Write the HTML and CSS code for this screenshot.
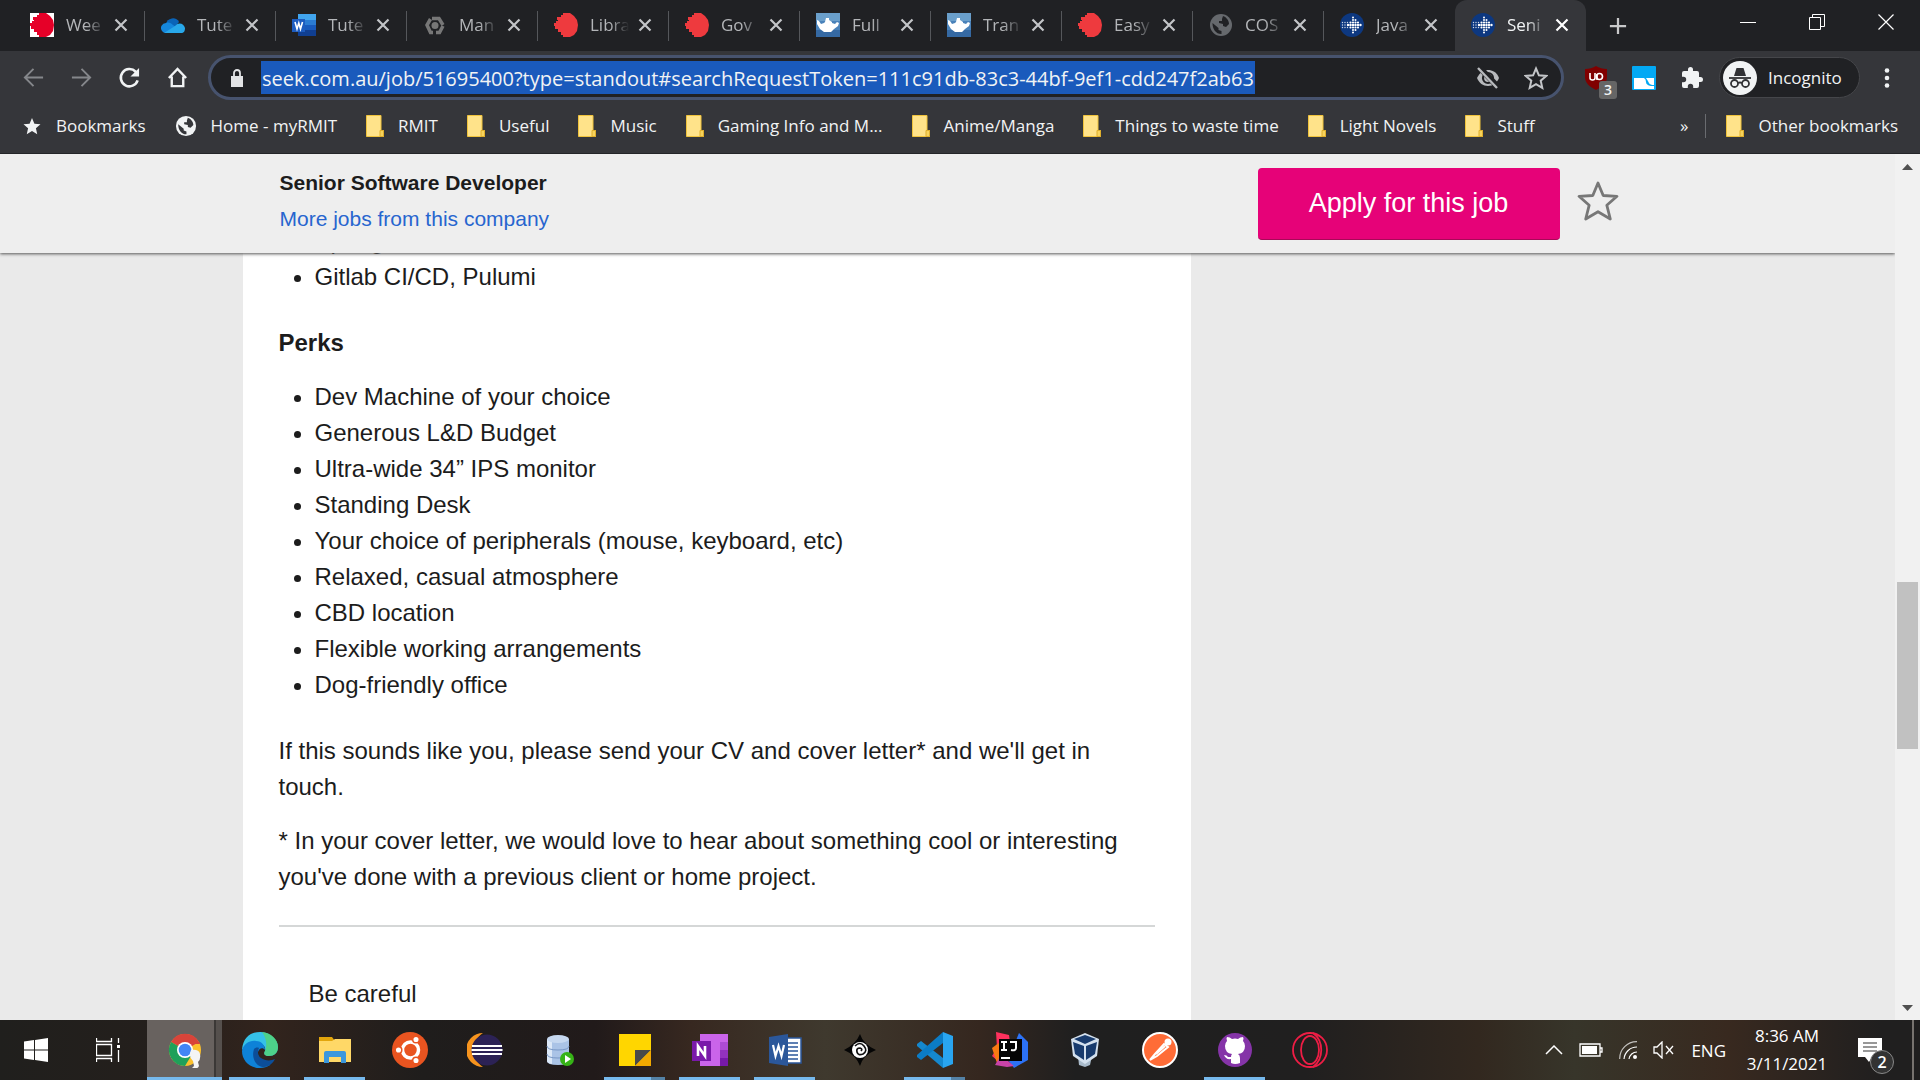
FILE: index.html
```html
<!DOCTYPE html>
<html lang="en">
<head>
<meta charset="utf-8">
<title>Senior Software Developer Job</title>
<link rel="stylesheet" href="styles.css">
</head>
<body>
<svg class="sprite" aria-hidden="true">
  <symbol id="i-close" viewBox="0 0 16 16"><path d="M2.500 2.500l11 11M13.500 2.500l-11 11" fill="none" stroke="currentColor" stroke-width="2.200"/></symbol>
  <symbol id="i-pixel" viewBox="0 0 24 24"><path d="M9 0h7l4 3 3 4 1 5-1 6-3 4-4 2H9v-2H7v-3H4v-3H1v-3H0v-3h2V8h2V7H3V4h4V2h2z" fill="currentColor"/></symbol>
  <symbol id="i-lamp" viewBox="0 0 24 24"><path fill="#3569a3" d="M0 0h24v24H0z"/><path fill="#4a82ba" d="M0 0h24v17H0z"/><path fill="#6a9fcb" d="M0 0h24v8H0z"/><path fill="#fff" d="M10 5h3v2l3 2v1l3 1 2-2 2 1-1 3-4 3-3 3H8l-4-3-3-5V7l2 1 2 3 3-1 1-1z"/></symbol>
  <symbol id="i-globe" viewBox="0 0 24 24"><circle cx="12" cy="12" r="11" fill="currentColor"/><path fill="var(--hole)" d="M14 3c3 1 6 4 6 8l-3 3-3-1v-2l-4-1V8h3V6zM3.500 10l6 5v2l3 1v3c-6 0-9-5-9-11z"/></symbol>
  <symbol id="i-seek" viewBox="0 0 24 24"><circle cx="12" cy="12" r="12" fill="#0d3880"/><g fill="none" stroke="#fff" stroke-linecap="round" stroke-dasharray="0 2.500"><path d="M8 12h14" stroke-width="2.400"/><path d="M10.500 9.500h9M10.500 14.500h9" stroke-width="2.200"/><path d="M13 7h4M13 17h4M13 4.500h2M13 19.500h2" stroke-width="2"/><path d="M2.500 9.500h6M2.500 12h4M2.500 14.500h6" stroke-width="1.400" opacity=".8"/></g></symbol>
  <symbol id="i-folder" viewBox="0 0 18 22"><path d="M.500.500h14.500v15h2.500v6H.500z" fill="#ffe38a" stroke="#f0c33c"/><path d="M14 21v-5.500h3.500v6H14z" fill="#f7d35c" stroke="#dfae2b"/></symbol>
  <symbol id="i-star" viewBox="0 0 24 24"><path d="M12 2.500l2.900 6.800 7.300.600-5.500 4.800 1.600 7.200-6.300-3.800-6.300 3.800 1.600-7.200-5.500-4.800 7.300-.600z"/></symbol>
</svg>

<header class="browser">
  <nav class="tabs" aria-label="Tabs">
    <div class="tab"><span class="fav fav-white"><svg><use href="#i-pixel"/></svg></span><a href="#">Wee</a><button aria-label="Close tab"><svg><use href="#i-close"/></svg></button></div>
    <div class="tab"><svg class="fav" viewBox="0 0 24 24"><path fill="#0a64b8" d="M5 11a7 7 0 0 1 13-2l-4 5-9 4z"/><path fill="#1587dc" d="M1 18a5 5 0 0 1 4-8c3-1 5 0 7 2l7 5-1 3H5c-2 0-3-1-4-2z"/><path fill="#28a8ea" d="M3 20l11-7c4-5 9-2 10 2 0 3-1 5-4 5z"/></svg><a href="#">Tute</a><button aria-label="Close tab"><svg><use href="#i-close"/></svg></button></div>
    <div class="tab"><svg class="fav" viewBox="0 0 24 24"><path fill="#41a5ee" d="M6 1h18v6H6z"/><path fill="#2b7cd3" d="M6 7h18v5H6z"/><path fill="#185abd" d="M6 12h18v5H6z"/><path fill="#103f91" d="M6 17h18v6H6z"/><path fill="#1d5cbf" d="M0 6h13v13H0z"/><path d="M3 9l2 7 1.800-6 1.700 6 2-7" fill="none" stroke="#fff" stroke-width="1.600"/></svg><a href="#">Tute</a><button aria-label="Close tab"><svg><use href="#i-close"/></svg></button></div>
    <div class="tab"><svg class="fav" viewBox="0 0 24 24"><g fill="none" stroke="#777" stroke-width="3.500"><path d="M9 5.500h7l4 6.500"/><path d="M20 13l-3.500 6.500H13"/><path d="M10 19.500H7.500L4 12l3.500-6"/></g><circle cx="12" cy="12.500" r="3.500" fill="#777"/></svg><a href="#">Man</a><button aria-label="Close tab"><svg><use href="#i-close"/></svg></button></div>
    <div class="tab"><svg class="fav fav-red"><use href="#i-pixel"/></svg><a href="#">Libra</a><button aria-label="Close tab"><svg><use href="#i-close"/></svg></button></div>
    <div class="tab"><svg class="fav fav-red"><use href="#i-pixel"/></svg><a href="#">Gov</a><button aria-label="Close tab"><svg><use href="#i-close"/></svg></button></div>
    <div class="tab"><svg class="fav"><use href="#i-lamp"/></svg><a href="#">Full</a><button aria-label="Close tab"><svg><use href="#i-close"/></svg></button></div>
    <div class="tab"><svg class="fav"><use href="#i-lamp"/></svg><a href="#">Tran</a><button aria-label="Close tab"><svg><use href="#i-close"/></svg></button></div>
    <div class="tab"><svg class="fav fav-red"><use href="#i-pixel"/></svg><a href="#">Easy</a><button aria-label="Close tab"><svg><use href="#i-close"/></svg></button></div>
    <div class="tab"><svg class="fav fav-grey"><use href="#i-globe"/></svg><a href="#">COS</a><button aria-label="Close tab"><svg><use href="#i-close"/></svg></button></div>
    <div class="tab tab-last"><svg class="fav"><use href="#i-seek"/></svg><a href="#">Java</a><button aria-label="Close tab"><svg><use href="#i-close"/></svg></button></div>
    <div class="tab tab-active"><svg class="fav"><use href="#i-seek"/></svg><a href="#">Seni</a><button aria-label="Close tab"><svg><use href="#i-close"/></svg></button></div>
    <button class="new-tab" aria-label="New tab"><svg viewBox="0 0 20 20"><path d="M10 1v18M1 10h18" stroke="#c8c9ca" stroke-width="2.500"/></svg></button>
    <div class="window-controls">
      <button aria-label="Minimise"><svg viewBox="0 0 16 16"><path d="M0 8.500h16" stroke="#fff"/></svg></button>
      <button aria-label="Restore"><svg viewBox="0 0 16 16"><path d="M.500 3.500h11v12H.500zM3.500 3.500v-3h12v12h-4" fill="none" stroke="#fff"/></svg></button>
      <button aria-label="Close window"><svg viewBox="0 0 16 16"><path d="M.500.500l15 15M15.500.500l-15 15" stroke="#fff" stroke-width="1.200"/></svg></button>
    </div>
  </nav>

  <div class="toolbar">
    <button class="nav-button dim" aria-label="Back"><svg viewBox="0 0 24 24"><path d="M22 12H3M12 3l-9 9 9 9" fill="none" stroke="currentColor" stroke-width="2"/></svg></button>
    <button class="nav-button dim" aria-label="Forward"><svg viewBox="0 0 24 24"><path d="M2 12h19M12 3l9 9-9 9" fill="none" stroke="currentColor" stroke-width="2"/></svg></button>
    <button class="nav-button" aria-label="Reload"><svg viewBox="0 0 24 24"><path d="M20.500 15A9 9 0 1 1 18.500 6l2 2" fill="none" stroke="currentColor" stroke-width="2.700"/><path d="M22 2v9h-9z" fill="currentColor"/></svg></button>
    <button class="nav-button" aria-label="Home"><svg viewBox="0 0 24 24"><path d="M3 12.500L12 3l9 9.500M6 11v10h12V11" fill="none" stroke="currentColor" stroke-width="2.500"/></svg></button>
    <div class="omnibox">
      <svg class="lock" viewBox="0 0 12 18"><path d="M0 7h12v11H0z" fill="#e2e3e5"/><path d="M3 8V4a3 3 0 0 1 6 0v4" fill="none" stroke="#e2e3e5" stroke-width="1.800"/></svg>
      <input type="text" aria-label="Address" value="seek.com.au/job/51695400?type=standout#searchRequestToken=111c91db-83c3-44bf-9ef1-cdd247f2ab63">
      <button class="eye" aria-label="Cookies blocked"><svg viewBox="0 0 24 24"><path d="M1 12c3-6 7-8 11-8s9 2 11 8c-2 5-6 8-11 8S3 17 1 12z" fill="#b8babd"/><circle cx="12" cy="12" r="5" fill="none" stroke="#202124" stroke-width="2.200"/><path d="M3 1l19 20" stroke="#202124" stroke-width="6"/><path d="M2 2l19 20" stroke="#b8babd" stroke-width="2.400"/></svg></button>
      <button class="fav-star" aria-label="Bookmark this page"><svg><use href="#i-star"/></svg></button>
    </div>
    <div class="extensions">
      <button class="ublock" aria-label="uBlock"><svg viewBox="0 0 22 24"><path d="M11 0c3 2 7 3 11 3v8c0 6-5 10-11 13C5 21 0 17 0 11V3c4 0 8-1 11-3z" fill="#800000"/><path d="M5 7v5q0 2 2.500 2T10 12V7M12 14V8" fill="none" stroke="#fff" stroke-width="1.600"/><circle cx="14.500" cy="10.500" r="3" fill="none" stroke="#fff" stroke-width="1.600"/></svg><span class="badge">3</span></button>
      <button aria-label="Reader"><svg viewBox="0 0 24 24"><rect width="24" height="24" rx="1" fill="#03a9f4"/><path d="M2 12h10q2 1 2 4t5 4h3v3H2z" fill="#fff"/><path d="M14 12h8v7q-4 0-5-2t-3-5z" fill="#fff"/></svg></button>
      <button aria-label="Extensions"><svg viewBox="0 0 24 24"><path d="M20.500 11H19V7a2 2 0 0 0-2-2h-4V3.500a2.500 2.500 0 0 0-5 0V5H4a2 2 0 0 0-2 2v3.800h1.500a2.700 2.700 0 0 1 0 5.400H2V20a2 2 0 0 0 2 2h3.800v-1.500a2.700 2.700 0 0 1 5.400 0V22H17a2 2 0 0 0 2-2v-4h1.500a2.500 2.500 0 0 0 0-5z" fill="#f1f3f4"/></svg></button>
    </div>
    <button class="incognito"><svg viewBox="0 0 34 34"><circle cx="17" cy="17" r="17" fill="#f1f3f4"/><path d="M11 15l2.500-8h7l2.500 8z" fill="#303134"/><path d="M6 17h22" stroke="#303134" stroke-width="1.800"/><g fill="none" stroke="#303134" stroke-width="1.800"><circle cx="11.500" cy="22.500" r="3.500"/><circle cx="22.500" cy="22.500" r="3.500"/><path d="M15 22q2-1 4 0"/></g></svg><span>Incognito</span></button>
    <button class="menu" aria-label="Menu"><svg viewBox="0 0 6 20"><g fill="#f1f3f4"><circle cx="3" cy="2.500" r="2.300"/><circle cx="3" cy="10" r="2.300"/><circle cx="3" cy="17.500" r="2.300"/></g></svg></button>
  </div>

  <nav class="bookmarks" aria-label="Bookmarks">
    <a href="#"><svg class="solid-star"><use href="#i-star"/></svg>Bookmarks</a>
    <a href="#"><svg class="myrmit"><use href="#i-globe"/></svg>Home - myRMIT</a>
    <a href="#"><svg class="folder"><use href="#i-folder"/></svg>RMIT</a>
    <a href="#"><svg class="folder"><use href="#i-folder"/></svg>Useful</a>
    <a href="#"><svg class="folder"><use href="#i-folder"/></svg>Music</a>
    <a href="#"><svg class="folder"><use href="#i-folder"/></svg>Gaming Info and M...</a>
    <a href="#"><svg class="folder"><use href="#i-folder"/></svg>Anime/Manga</a>
    <a href="#"><svg class="folder"><use href="#i-folder"/></svg>Things to waste time</a>
    <a href="#"><svg class="folder"><use href="#i-folder"/></svg>Light Novels</a>
    <a href="#"><svg class="folder"><use href="#i-folder"/></svg>Stuff</a>
    <div class="bookmarks-end">
      <button aria-label="More bookmarks">»</button>
      <a href="#"><svg class="folder"><use href="#i-folder"/></svg>Other bookmarks</a>
    </div>
  </nav>
</header>

<div class="viewport">
  <div class="page">
    <div class="job-bar">
      <div class="container job-bar-inner">
        <div class="job-title">
          <h1>Senior Software Developer</h1>
          <a href="#">More jobs from this company</a>
        </div>
        <button class="apply">Apply for this job</button>
        <button class="save" aria-label="Save job"><svg viewBox="0 0 44 42"><path d="M22 3l5.200 12.500L41 16.300 30.800 25.200 34.300 39 22 31.700 9.700 39l3.500-13.800L3 16.300l13.800-.800z" fill="none" stroke="#777" stroke-width="2.800" stroke-linejoin="round"/></svg></button>
      </div>
    </div>
    <div class="container">
      <main class="card">
        <ul class="stack">
          <li>Spring</li>
          <li>Gitlab CI/CD, Pulumi</li>
        </ul>
        <h2>Perks</h2>
        <ul>
          <li>Dev Machine of your choice</li>
          <li>Generous L&amp;D Budget</li>
          <li>Ultra-wide 34” IPS monitor</li>
          <li>Standing Desk</li>
          <li>Your choice of peripherals (mouse, keyboard, etc)</li>
          <li>Relaxed, casual atmosphere</li>
          <li>CBD location</li>
          <li>Flexible working arrangements</li>
          <li>Dog-friendly office</li>
        </ul>
        <p>If this sounds like you, please send your CV and cover letter* and we'll get in touch.</p>
        <p>* In your cover letter, we would love to hear about something cool or interesting you've done with a previous client or home project.</p>
        <section class="careful"><h3>Be careful</h3></section>
      </main>
    </div>
  </div>
  <div class="scrollbar" aria-hidden="true">
    <svg viewBox="0 0 25 25"><path d="M7 16l5.500-6 5.500 6z" fill="#505050"/></svg>
    <div class="track"><div class="before"></div><div class="thumb"></div><div class="after"></div></div>
    <svg viewBox="0 0 25 25"><path d="M7 10l5.500 6 5.500-6z" fill="#505050"/></svg>
  </div>
</div>

<footer class="taskbar">
  <button class="system" aria-label="Start"><svg class="small" viewBox="0 0 24 24"><path d="M0 3.500l10-1.400v9.400H0zM11 2l13-2v11.500H11zM0 12.500h10v9.400L0 20.500zM11 12.500h13V24l-13-1.900z" fill="#fff"/></svg></button>
  <button class="system" aria-label="Task view"><svg class="small" viewBox="0 0 24 24"><path d="M.500 0v3.500h15V0M.500 24v-3.500h15V24M.500 6.500h15v11H.500zM22.500 0v5M22.500 12v12" fill="none" stroke="#fff" stroke-width="1.300"/><path d="M21 7h3v3h-3z" fill="#fff"/></svg></button>
  <div class="apps">
    <button class="app current" aria-label="Chrome"><svg viewBox="0 0 36 36"><circle cx="18" cy="18" r="16" fill="#fbc02d"/><path d="M18 18L4 10a16 16 0 0 1 28 0z" fill="#d8443a"/><path d="M18 18L4.100 10A16 16 0 0 0 18 34l6-10z" fill="#1fa05a"/><path d="M18 10h14.200l1 2H18z" fill="#d8443a"/><circle cx="18" cy="18" r="8" fill="#fff"/><circle cx="18" cy="18" r="6.300" fill="#4285f4"/><path d="M24 18q8-1 9 4 1 5-2 8l1 4q-2 4-7 2l2-2-1-5q-5-4-2-11z" fill="#f4f4f4"/></svg></button>
    <button class="app open" aria-label="Edge"><svg viewBox="0 0 36 36"><path d="M0 18C1 5 9 0 18 0c11 0 18 8 18 15 0 6-4 9-9 9-4 0-6-2-4-5 1-3-1-7-6-7C9 12 2 15 0 18z" fill="#35c1e8"/><path d="M20 0c10 1 16 8 16 15 0 6-4 9-9 9-4 0-6-2-4-5 2-5 2-12-3-19z" fill="#55d66b" opacity=".75"/><path d="M0 19C1 12 8 8 14 9c6 0 9 5 9 9-2-3-6-2-7 2-1 6 5 13 12 13-3 2-6 3-10 3C7 36 0 28 0 19z" fill="#0e82d8"/><path d="M12 17c-3 9 2 18 10 18 5 0 9-4 11-8-4 2-10 2-14-1-3-2-4-6-2-10-2-1-4 0-5 1z" fill="#0c4e99"/></svg></button>
    <button class="app open" aria-label="File Explorer"><svg viewBox="0 0 36 36"><path d="M2 5h13l3 4h14v4H2z" fill="#e2a50c"/><path d="M2 9h13l3-2h16v23H2z" fill="#ffd867"/><path d="M7 31V21q0-2 2-2h18q2 0 2 2v10h-5v-6H12v6z" fill="#3b97dc"/></svg></button>
    <button class="app" aria-label="Ubuntu"><svg viewBox="0 0 36 36"><circle cx="18" cy="18" r="18" fill="#e95420"/><circle cx="18.500" cy="18" r="8" fill="none" stroke="#fff" stroke-width="3.500"/><g fill="#fff" stroke="#e95420" stroke-width="1.500"><circle cx="6.500" cy="18" r="3.300"/><circle cx="24" cy="7.500" r="3.300"/><circle cx="24" cy="28.500" r="3.300"/></g></svg></button>
    <button class="app" aria-label="Eclipse"><svg viewBox="0 0 36 36"><path d="M16 1A17 17 0 0 0 16 35 20 20 0 0 1 16 1z" fill="#f7941e"/><circle cx="20" cy="18" r="15.500" fill="#2c2255"/><path d="M5 14h30M4.500 18h31M5 22h30" stroke="#fff" stroke-width="2"/></svg></button>
    <button class="app" aria-label="SQL Workbench"><svg viewBox="0 0 36 36"><path d="M5 7v22q0 4 11 4t11-4V7z" fill="#aac3e6"/><path d="M5 7v22q0 2 5 3V10z" fill="#dce8f7"/><ellipse cx="16" cy="7" rx="11" ry="4" fill="#c6d8f0"/><path d="M5 14q0 4 11 4t11-4M5 22q0 4 11 4t11-4" fill="none" stroke="#7897c5"/><circle cx="25" cy="27" r="7" fill="#36b316"/><path d="M23 23l6 4-6 4z" fill="#fff"/></svg></button>
    <button class="app open stacked" aria-label="Sticky Notes"><svg viewBox="0 0 36 36"><path d="M2 2h32v32H2z" fill="#ffd600"/><path d="M18 34V18h16z" fill="#494949"/><path d="M18 34l16-16v16z" fill="#f2a900"/></svg></button>
    <button class="app open" aria-label="OneNote"><svg viewBox="0 0 36 36"><path d="M8 2h28v32H8z" fill="#ca64ea"/><path d="M28 10h8v8h-8z" fill="#ae4bd5"/><path d="M28 18h8v8h-8z" fill="#9332bf"/><path d="M28 26h8v8h-8z" fill="#7719aa"/><path d="M0 9h19v20H0z" fill="#7a19aa"/><path d="M6 24V14l7 10V14" fill="none" stroke="#fff" stroke-width="2.600"/></svg></button>
    <button class="app open" aria-label="Word"><svg viewBox="0 0 36 36"><path d="M17 6h17v25H17z" fill="#fff" stroke="#2b579a" stroke-width="1.500"/><path d="M20 11h11M20 15h11M20 19h11M20 23h11M20 27h11" stroke="#2b579a" stroke-width="1.600"/><path d="M2 5l19-3v32L2 31z" fill="#2b579a"/><path d="M6 13l2.500 11L11.500 14l3 10L17 13" fill="none" stroke="#fff" stroke-width="2.200"/></svg></button>
    <button class="app" aria-label="Inkdrop"><svg viewBox="0 0 36 36"><path d="M18 2q3 10 16 16-13 5-16 16Q14 23 2 18 14 12 18 2z" fill="#050505"/><circle cx="18" cy="18" r="8" fill="#fff"/><path d="M13 14q5-5 9 0t-1 8q-5 2-6-2t3-4q3 1 1 3" fill="none" stroke="#111" stroke-width="1.700"/></svg></button>
    <button class="app open stacked" aria-label="VS Code"><svg viewBox="0 0 36 36"><path d="M0 12l4-3 22 17v10L0 14z" fill="#1588ce"/><path d="M26 0L0 23v2l4 3 22-17z" fill="#0b7cc6"/><path d="M26 0l10 4v28l-10 4z" fill="#29a5f0"/></svg></button>
    <button class="app" aria-label="IntelliJ IDEA"><svg viewBox="0 0 36 36"><path d="M4 0l13 3 2 14L7 30 0 24l5-8z" fill="#fe315d"/><path d="M0 16l8-6 4 16-7 5z" fill="#f97a12"/><path d="M27 1l9 9v18l-14 8-6-8z" fill="#2c72f6"/><path d="M3 33l6-10 13 11-7 1z" fill="#c843a8"/><path d="M7 7h23v22H7z" fill="#050505"/><path d="M9 10h6M12 10v8M9 18h6M18 10h6v6q0 3-5 2M9 26h9" fill="none" stroke="#fff" stroke-width="2"/></svg></button>
    <button class="app" aria-label="VirtualBox"><svg viewBox="0 0 36 36"><path d="M11 24h14l-2 9-5 2-6-2z" fill="#a9bbcb"/><path d="M18 1l14 6-2 17-12 8L6 24 4 7z" fill="#d4e1ee"/><path d="M18 3l11 4-11 5L7 7zM6 10l11 4v14l-9-6zM30 10l-11 4v14l9-6z" fill="#183b6d"/></svg></button>
    <button class="app" aria-label="Postman"><svg viewBox="0 0 36 36"><circle cx="18" cy="18" r="17" fill="#ff6c37" stroke="#fff" stroke-width="2"/><path d="M8 28l5-6 9-10 4 3-11 9z" fill="none" stroke="#fff" stroke-width="2"/><circle cx="26" cy="10" r="3.500" fill="#fff"/><path d="M14 22l9-8" stroke="#fff" stroke-width="2"/></svg></button>
    <button class="app open" aria-label="GitHub Desktop"><svg viewBox="0 0 36 36"><circle cx="18" cy="18" r="17" fill="#8534a8"/><path d="M14 31v-4q-5 1-7-4 3 0 4 2l3 0q0-2 1-3-7-1-7-8 0-3 2-5-1-3 0-4 3 0 5 2 3-1 6 0 2-2 5-2 1 1 0 4 2 2 2 5 0 7-7 8 2 1 2 4v5q-5 2-9 0z" fill="#fff"/></svg></button>
    <button class="app" aria-label="Opera GX"><svg viewBox="0 0 36 36"><g fill="none" stroke="#ee1d45" stroke-width="1.800"><circle cx="18" cy="18" r="17"/><ellipse cx="18" cy="18" rx="9" ry="14"/><path d="M21 1c11 8 11 26 0 34"/></g></svg></button>
  </div>
  <div class="tray">
    <button aria-label="Show hidden icons"><svg class="chevron" viewBox="0 0 18 10"><path d="M1 9l8-8 8 8" fill="none" stroke="#fff" stroke-width="1.500"/></svg></button>
    <button aria-label="Battery"><svg class="battery" viewBox="0 0 24 14"><path d="M1 1h20v12H1zM21 5h2v4h-2" fill="none" stroke="#fff" stroke-width="1.300"/><path d="M3 3h15v8H3z" fill="#fff"/></svg></button>
    <button aria-label="Wi-Fi"><svg class="wifi" viewBox="0 0 18 18"><g fill="none" stroke="#fff" stroke-width="1.200"><path d="M.700 18A17 17 0 0 1 18 .700" opacity=".7"/><path d="M5 18A13 13 0 0 1 18 6M10 18a8 8 0 0 1 8-7"/></g><circle cx="16" cy="16" r="2" fill="#fff"/></svg></button>
    <button aria-label="Muted"><svg class="volume" viewBox="0 0 22 18"><path d="M1 6h3l5-5v16l-5-5H1zM13 5l7 8M20 5l-7 8" fill="none" stroke="#fff" stroke-width="1.300"/></svg></button>
    <button class="language">ENG</button>
    <div class="clock"><time>8:36 AM</time><time>3/11/2021</time></div>
    <button class="notify" aria-label="Notifications"><svg viewBox="0 0 24 24"><path d="M0 0h24v19H14l-3 5-4-5H0z" fill="#fff"/><path d="M5 5h14M5 9h14M5 13h14" stroke="#333" stroke-width="1.200"/></svg><span>2</span></button>
  </div>
</footer>
</body>
</html>
```
FILE: styles.css
```css
* { box-sizing: border-box; }

body {
  margin: 0;
  height: 100vh;
  display: flex;
  flex-direction: column;
  overflow: hidden;
  font-family: "Open Sans", "Noto Sans", sans-serif;
  color: #1c1c1c;
}

button {
  display: flex;
  align-items: center;
  justify-content: center;
  margin: 0;
  padding: 0;
  border: 0;
  background: none;
  color: inherit;
  font: inherit;
}

a { text-decoration: none; color: inherit; }
h1, h2, h3, p, ul { margin: 0; padding: 0; }
svg { display: block; flex: none; }
.sprite { display: none; }

/* Browser frame */
.browser { flex: none; background: #35363a; color: #f1f3f4; border-bottom: 1px solid #242528; }

.tabs { display: flex; height: 51px; padding-left: 14px; background: #202124; }

.tab {
  display: flex;
  align-items: center;
  flex: 0 1 131px;
  min-width: 0;
  padding: 0 16px 2px;
  position: relative;
  color: #b4b6b9;
  font-size: 17px;
}
.tab::after { content: ""; position: absolute; right: 0; top: 11px; height: 30px; width: 1px; background: #55575b; }
.tab-last::after, .tab-active::after { display: none; }
.tab a {
  flex: 1;
  min-width: 0;
  margin: 0 7px 0 12px;
  overflow: hidden;
  white-space: nowrap;
  -webkit-mask-image: linear-gradient(90deg, #000 50%, transparent 98%);
  mask-image: linear-gradient(90deg, #000 50%, transparent 98%);
}
.tab button svg { width: 16px; height: 16px; color: #c3c5c8; }
.tab-active { background: #35363a; border-radius: 12px 12px 0 0; color: #f1f3f4; }
.tab-active button svg { color: #fff; }

.fav { width: 24px; height: 24px; flex: none; }
.fav svg { width: 24px; height: 24px; }
.fav-white { background: #fff; color: #e60028; }
.fav-red { color: #ee3a3e; }
.fav-grey { color: #66696d; --hole: #202124; }

.new-tab { width: 64px; }
.new-tab svg { width: 18px; height: 18px; }
.window-controls { display: flex; margin-left: auto; height: 43px; }
.window-controls button { width: 69px; }
.window-controls svg { width: 16px; height: 16px; }

.toolbar { display: flex; align-items: center; height: 53px; padding: 0 24px 0 9px; }
.nav-button { width: 48px; height: 48px; }
.nav-button svg { width: 23px; height: 23px; }
.dim { color: #85878b; }

.omnibox {
  flex: 1;
  display: flex;
  align-items: center;
  height: 45px;
  margin-left: 7px;
  padding: 0 1px 0 20px;
  border: 3px solid #47536e;
  border-radius: 23px;
  background: #202124;
}
.lock { width: 12px; height: 18px; margin-right: 18px; }
.omnibox input {
  field-sizing: content;
  min-width: 0;
  height: 33px;
  margin-right: auto;
  padding: 1px 1px 0;
  border: 0;
  background: #1a5abc;
  color: #f1f3f4;
  font: 20px "Open Sans", "Noto Sans", sans-serif;
}
.omnibox button { width: 48px; flex: none; }
.eye svg { width: 24px; height: 24px; }
.fav-star svg { width: 24px; height: 24px; fill: none; stroke: #c3c5c8; stroke-width: 2px; }

.extensions { display: flex; margin: 0 3px 0 8px; }
.extensions button { width: 48px; position: relative; }
.extensions svg { width: 24px; height: 24px; }
.badge {
  position: absolute;
  left: 27px;
  top: 15px;
  width: 18px;
  height: 18px;
  border-radius: 3px;
  background: #666;
  font-size: 14px;
  font-weight: 600;
  line-height: 18px;
}

.incognito {
  justify-content: flex-start;
  width: 141px;
  height: 41px;
  padding-left: 3px;
  gap: 11px;
  border: 1px solid #45464a;
  border-radius: 21px;
  background: #202124;
  font-size: 17px;
}
.incognito svg { width: 34px; height: 34px; }
.menu { width: 18px; margin-left: 18px; }
.menu svg { width: 6px; height: 24px; }

.bookmarks { display: flex; align-items: center; gap: 29px; height: 49px; padding: 0 22px 6px; font-size: 17px; white-space: nowrap; }
.bookmarks a { display: flex; align-items: center; gap: 14px; }
.folder { width: 18px; height: 22px; }
.solid-star { width: 20px; height: 20px; fill: #f1f3f4; }
.myrmit { width: 22px; height: 22px; color: #f1f3f4; --hole: #35363a; }
.bookmarks-end { display: flex; align-items: center; gap: 17px; margin-left: auto; }
.bookmarks-end a { height: 24px; padding-left: 20px; border-left: 1px solid #6a6c70; }

/* Web page */
.viewport { flex: 1; min-height: 0; display: flex; background: #eaeaea; font-family: "Liberation Sans", Arial, sans-serif; }
.page { flex: 1; min-width: 0; overflow: hidden; }
.container { max-width: 1410px; margin: 0 auto; }

.job-bar { position: relative; z-index: 1; background: #eee; box-shadow: 0 1px 3px #555; }
.job-bar-inner { display: flex; align-items: flex-start; height: 99px; padding: 11px 33px 0 37px; }
.job-title { margin-right: auto; font-size: 21px; line-height: 36px; }
.job-title h1 { font-size: 21px; line-height: 36px; }
.job-title a { color: #2765cf; }
.apply {
  width: 302px;
  height: 72px;
  margin-top: 3px;
  border-radius: 4px;
  border-bottom: 1px solid #a80858;
  background: #e60278;
  color: #fff;
  font-size: 27px;
}
.save { width: 44px; height: 72px; margin-left: 16px; }
.save svg { width: 44px; height: 44px; }

.card { width: 948px; max-width: 100%; padding: 0 36px 60px; background: #fff; font-size: 24px; line-height: 36px; }
.card ul { padding-left: 36px; margin-bottom: 30px; }
.card .stack { margin-top: -30px; }
.card h2 { font-size: 24px; margin-bottom: 18px; }
.card p { margin-bottom: 18px; }
.careful { margin-top: 30px; padding: 49px 30px 0; border-top: 2px solid #d5d7d7; }
.careful h3 { font-size: 24px; font-weight: 400; }

.scrollbar { flex: none; width: 25px; display: flex; flex-direction: column; background: #f1f1f1; }
.scrollbar svg { width: 25px; height: 25px; }
.track { flex: 1; display: flex; flex-direction: column; padding: 0 2px; }
.before { flex: 403; }
.thumb { flex: 167; background: #c1c1c1; }
.after { flex: 246; }

/* Windows taskbar */
.taskbar {
  flex: none;
  display: flex;
  height: 60px;
  color: #fff;
  background: linear-gradient(90deg, #201f1d 0, #241f1c 8%, #32241d 14%, #1f1d1c 22%, #211a1a 31%, #372820 36%, #3f392e 43%, #35271f 51%, #1f1f1f 56%, #201f1f 68%, #32281f 77%, #37352a 82%, #38291f 90%, #201f1f 98%);
}
.system { width: 72px; }
.small { width: 24px; height: 24px; }
.apps { display: flex; margin-left: 3px; }
.app { width: 75px; position: relative; }
.app svg { width: 36px; height: 36px; }
.current { background: linear-gradient(90deg, #68625f 67px, #3b3836 67px, #3b3836 69px, #55504d 69px); border-bottom: 3px solid #76b9ed; padding-top: 3px; }
.open::after { content: ""; position: absolute; left: 7px; right: 7px; bottom: 0; height: 3px; background: #76b9ed; }
.stacked::after { background: linear-gradient(90deg, #76b9ed 47px, #5482a6 47px); }

.tray { display: flex; align-items: center; margin-left: auto; margin-right: 6px; padding-right: 30px; border-right: 2px solid #77736f; }
.chevron { width: 18px; height: 10px; }
.battery { width: 24px; height: 14px; }
.wifi { width: 18px; height: 18px; }
.volume { width: 22px; height: 18px; }
.tray button { margin-right: 16px; }
.language { font-size: 17px; }
.clock { display: flex; flex-direction: column; width: 90px; margin-right: 26px; font-size: 17px; line-height: 28px; text-align: center; }
.tray .notify { position: relative; margin-right: 0; }
.notify svg { width: 24px; height: 24px; }
.notify span {
  position: absolute;
  left: 12px;
  top: 12px;
  width: 24px;
  height: 24px;
  border: 1px solid #888;
  border-radius: 50%;
  background: #333;
  font-size: 16px;
  font-weight: 600;
  line-height: 22px;
}
```
